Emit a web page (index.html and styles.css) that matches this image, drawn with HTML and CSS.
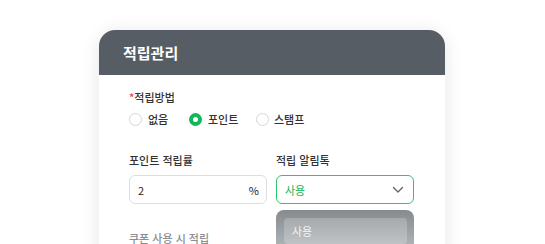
FILE: index.html
```html
<!DOCTYPE html>
<html lang="ko">
<head>
<meta charset="utf-8">
<link rel="stylesheet" href="styles.css">
</head>
<body>
<div class="card">
  <div class="card-header">적립관리</div>
  <div class="card-body">
    <div class="label"><span class="req">*</span>적립방법</div>
    <div class="radios">
      <label class="radio"><span class="dot"></span>없음</label>
      <label class="radio on"><span class="dot"></span>포인트</label>
      <label class="radio"><span class="dot"></span>스탬프</label>
    </div>
    <div class="grid">
      <div class="field">
        <div class="label">포인트 적립률</div>
        <div class="input"><span>2</span><span class="unit">%</span></div>
      </div>
      <div class="field">
        <div class="label">적립 알림톡</div>
        <div class="select-wrap">
          <div class="select"><span>사용</span>
            <svg width="12" height="8" viewBox="0 0 12 8"><path d="M1.5 1.5 L6 6 L10.5 1.5" fill="none" stroke="#666" stroke-width="1.4" stroke-linecap="round" stroke-linejoin="round"/></svg>
          </div>
          <div class="menu"><div class="menu-item">사용</div></div>
        </div>
      </div>
    </div>
    <div class="label muted">쿠폰 사용 시 적립</div>
  </div>
</div>
</body>
</html>
```
FILE: styles.css
```css
html, body { margin: 0; padding: 0; background: #fff; }
body {
  font-family: "Noto Sans CJK KR", "Noto Sans", sans-serif;
  color: #333;
  padding: 30px 0 0 99px;
  height: 244px;
  overflow: hidden;
  box-sizing: border-box;
}
.card {
  width: 346px;
  height: 260px;
  border-radius: 16px 16px 0 0;
  background: #fff;
  box-shadow: 0 2px 18px rgba(0,0,0,0.10);
  overflow: visible;
}
.card-header {
  height: 45px;
  background: #575d65;
  border-radius: 16px 16px 0 0;
  color: #fff;
  font-size: 15px;
  font-weight: 700;
  line-height: 45px;
  padding-left: 24px;
}
.card-body {
  padding: 14px 31px 0 30px;
}
.label {
  font-size: 11px;
  line-height: 16px;
  color: #333;
  font-weight: 500;
}
.req { color: #f0393c; }
.radios {
  display: flex;
  gap: 0;
  margin-top: 6px;
  height: 16px;
  align-items: center;
}
.radio {
  display: flex;
  align-items: center;
  font-size: 11px;
  color: #333;
  font-weight: 500;
}
.radio:nth-child(1) { width: 60px; }
.radio:nth-child(2) { width: 67px; }
.dot {
  width: 11px;
  height: 11px;
  border: 1px solid #d4d6d9;
  border-radius: 50%;
  margin-right: 6px;
  box-sizing: content-box;
}
.radio:nth-child(3) .dot { margin-right: 5px; }
.radio.on .dot {
  width: 5px;
  height: 5px;
  border: 4px solid #16b55a;
}
.grid {
  display: grid;
  grid-template-columns: 138px 138px;
  column-gap: 9px;
  margin-top: 25px;
}
.field .label { margin-bottom: 7px; }
.input, .select {
  height: 29px;
  box-sizing: border-box;
  border: 1px solid #dcdee1;
  border-radius: 6px;
  display: flex;
  align-items: center;
  justify-content: space-between;
  padding: 0 7px 0 8px;
  font-size: 11px;
}
.input { color: #222; }
.input .unit { margin-right: 0; }
.select-wrap { position: relative; }
.select {
  border: 1px solid #2ec46b;
  color: #16b55a;
  padding-right: 9px;
}
.menu {
  position: absolute;
  left: 0;
  top: 35px;
  width: 138px;
  height: 40px;
  border-radius: 8px 8px 0 0;
  background: linear-gradient(#848a8e, #b4b8bb);
  padding: 8px 7px 0 8px;
  box-sizing: border-box;
}
.menu-item {
  height: 26px;
  border-radius: 4px;
  background: linear-gradient(#a6aaad, #bec2c4);
  color: #f2f3f4;
  font-size: 11px;
  line-height: 26px;
  padding-left: 8px;
}
.muted {
  color: #8a8d91;
  margin-top: 26px;
}
```
